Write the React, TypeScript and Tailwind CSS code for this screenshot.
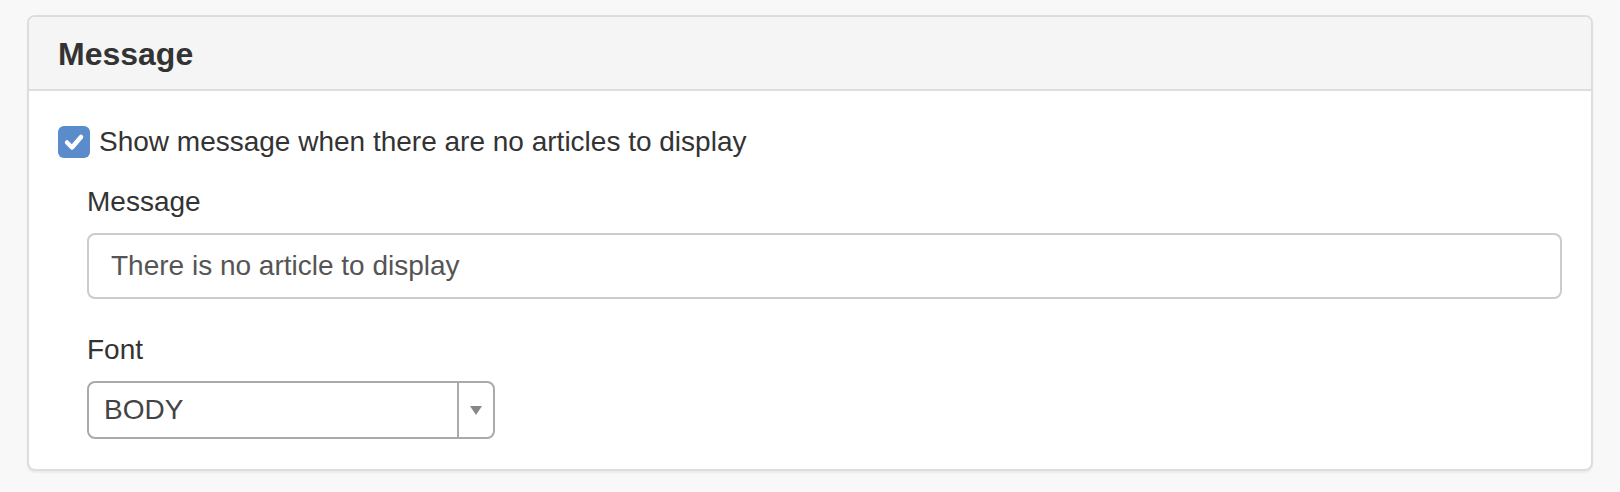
import React, { useState } from "react";

export default function App() {
    const [show, setShow] = useState(true);
    const [message, setMessage] = useState("There is no article to display");

    return (
        <div className="min-h-[492px] w-full bg-[#f8f8f8] pt-[15px] px-[27px] text-[#333] font-['Liberation_Sans',Arial,sans-serif]">
            <div className="rounded-[8px] border-2 border-[#dddddd] bg-white shadow-[0_2px_2px_rgba(0,0,0,0.05)] overflow-hidden">
                <div className="bg-[#f5f5f5] border-b-2 border-[#dddddd] px-[29px] pt-[20px] pb-[17px]">
                    <h3 className="text-[32px] leading-[35px] font-bold text-[#333]">Message</h3>
                </div>

                <div className="px-[29px] pt-[35px] pb-[30px]">
                    <label className="flex items-center h-[32px] gap-[9px] text-[28px] cursor-pointer">
                        <span
                            onClick={() => setShow(!show)}
                            className="flex items-center justify-center w-[32px] h-[32px] rounded-[6px] bg-[#5a8bcb] shrink-0"
                        >
                            {show && (
                                <svg width="32" height="32" viewBox="0 0 32 32">
                                    <polyline points="9,16.5 14,21.5 23,11" fill="none" stroke="white" strokeWidth="4.5" strokeLinecap="round" strokeLinejoin="round" />
                                </svg>
                            )}
                        </span>
                        Show message when there are no articles to display
                    </label>

                    <div className="pl-[29px]">
                        <div className="mt-[24px] text-[28px] leading-[40px]">Message</div>
                        <input
                            type="text"
                            value={message}
                            onChange={(e) => setMessage(e.target.value)}
                            className="mt-[11px] block w-full h-[66px] rounded-[8px] border-2 border-[#cccccc] bg-white pl-[22px] text-[28px] text-[#555] outline-none"
                        />

                        <div className="mt-[31px] text-[28px] leading-[40px]">Font</div>
                        <div className="mt-[11px] flex w-[408px] h-[58px] rounded-[8px] border-2 border-[#aaaaaa] bg-white">
                            <div className="flex-1 flex items-center pl-[15px] text-[28px] text-[#444]">BODY</div>
                            <div className="w-[36px] border-l-2 border-[#aaaaaa] flex items-center justify-center">
                                <svg width="12" height="9" viewBox="0 0 12 9">
                                    <polygon points="0,0 12,0 6,9" fill="#888888" />
                                </svg>
                            </div>
                        </div>
                    </div>
                </div>
            </div>
        </div>
    );
}
